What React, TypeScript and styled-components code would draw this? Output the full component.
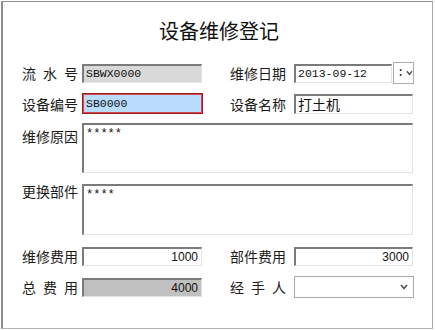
import styled, { createGlobalStyle } from 'styled-components';

const GlobalStyle = createGlobalStyle`
  body {
    margin: 0;
    background: #fff;
    font-family: "Noto Sans CJK SC", "Noto Sans", sans-serif;
    color: #111;
  }
`;

const Window = styled.div`
  box-sizing: border-box;
  width: 432px;
  height: 328px;
  margin: 1px 0 0 1px;
  border-style: solid;
  border-width: 1px 1px 1px 2px;
  border-color: #8e8e8e #a8a8a8 #b4b4b4 #8e8e8e;
  background: #fff;
`;

const Title = styled.h1`
  margin: 0;
  padding: 17px 0 0 3px;
  text-align: center;
  font-size: 20px;
  line-height: 24px;
  font-weight: normal;
  color: #111;
`;

const Form = styled.div`
  display: flex;
  flex-direction: column;
  padding-left: 19px;
  margin-top: 19px;
`;

const Row = styled.div<{ $gap: number; $h: number; $top?: boolean }>`
  display: grid;
  grid-template-columns: 60px 148px 64px 121px;
  align-items: ${(p) => (p.$top ? 'start' : 'center')};
  height: ${(p) => p.$h}px;
  margin-top: ${(p) => p.$gap}px;
`;

const Label = styled.span<{ $offset?: number }>`
  display: block;
  width: 56px;
  font-size: 14px;
  line-height: 20px;
  color: #1a1a1a;
  text-align: justify;
  text-align-last: justify;
  white-space: nowrap;
  margin-top: ${(p) => p.$offset ?? 0}px;
`;

const Field = styled.input<{ $bg?: string; $w?: number; $h?: number; $num?: boolean; $cjk?: boolean }>`
  box-sizing: border-box;
  width: ${(p) => p.$w ?? 120}px;
  height: ${(p) => p.$h ?? 19}px;
  margin: 0;
  padding: 0 3px 0 2px;
  border-style: solid;
  border-width: 2px 1px 1px 2px;
  border-color: #7b7b7b #e3e3e3 #e3e3e3 #7b7b7b;
  background: ${(p) => p.$bg ?? '#fff'};
  color: #111;
  outline: none;
  text-align: ${(p) => (p.$num ? 'right' : 'left')};
  font-family: ${(p) =>
    p.$num
      ? '"Liberation Sans", sans-serif'
      : p.$cjk
      ? '"Noto Sans CJK SC", sans-serif'
      : '"Liberation Mono", monospace'};
  font-size: ${(p) => (p.$num ? 12 : p.$cjk ? 14 : 11.5)}px;
`;

const FocusField = styled(Field)`
  border: 1px solid #9e1b1f;
  box-shadow: inset 0 0 0 1px #cf4a4e;
  padding-left: 3px;
`;

const Memo = styled.textarea`
  grid-column: 2 / 5;
  box-sizing: border-box;
  width: 331px;
  height: 100%;
  margin: 0;
  padding: 2px;
  resize: none;
  overflow: hidden;
  border-style: solid;
  border-width: 2px 1px 1px 2px;
  border-color: #7b7b7b #e3e3e3 #e3e3e3 #7b7b7b;
  background: #fff;
  color: #111;
  outline: none;
  font-family: "Liberation Mono", monospace;
  font-size: 12px;
  line-height: 15px;
`;

const DateWrap = styled.div`
  display: flex;
  align-items: center;
  gap: 1px;
`;

const DropButton = styled.div`
  box-sizing: border-box;
  width: 21px;
  height: 22px;
  display: flex;
  align-items: center;
  gap: 2px;
  padding-left: 3px;
  border: 1px solid #acacac;
  background: #fff;
  font-family: "Liberation Mono", monospace;
  font-size: 12px;
  color: #222;
`;

const Combo = styled.div`
  box-sizing: border-box;
  width: 120px;
  height: 22px;
  display: flex;
  align-items: center;
  justify-content: flex-end;
  padding-right: 5px;
  border: 1px solid #a9a9a9;
  background: #fff;
`;

const Chevron = () => (
  <svg width="8" height="6" viewBox="0 0 8 6">
    <polyline points="1,1 4,4.5 7,1" fill="none" stroke="#555" strokeWidth="1.7" />
  </svg>
);

export default function App() {
  return (
    <>
      <GlobalStyle />
      <Window>
        <Title>设备维修登记</Title>
        <Form>
          <Row $gap={0} $h={22}>
            <Label>流 水 号</Label>
            <Field readOnly defaultValue="SBWX0000" $bg="#d9d9d9" />
            <Label>维修日期</Label>
            <DateWrap>
              <Field readOnly defaultValue="2013-09-12" $w={98} />
              <DropButton>
                <span>:</span>
                <Chevron />
              </DropButton>
            </DateWrap>
          </Row>
          <Row $gap={9} $h={21}>
            <Label>设备编号</Label>
            <FocusField readOnly defaultValue="SB0000" $bg="#b9dcfd" $w={121} $h={21} />
            <Label>设备名称</Label>
            <Field readOnly defaultValue="打土机" $w={119} $h={20} $cjk />
          </Row>
          <Row $gap={9} $h={50} $top>
            <Label $offset={3}>维修原因</Label>
            <Memo readOnly defaultValue="*****" />
          </Row>
          <Row $gap={11} $h={51} $top>
            <Label $offset={-3}>更换部件</Label>
            <Memo readOnly defaultValue="****" />
          </Row>
          <Row $gap={11} $h={20}>
            <Label>维修费用</Label>
            <Field readOnly defaultValue="1000" $num />
            <Label>部件费用</Label>
            <Field readOnly defaultValue="3000" $w={119} $num />
          </Row>
          <Row $gap={10} $h={22}>
            <Label>总 费 用</Label>
            <Field readOnly defaultValue="4000" $bg="#c0c0c0" $num />
            <Label>经 手 人</Label>
            <Combo>
              <Chevron />
            </Combo>
          </Row>
        </Form>
      </Window>
    </>
  );
}
